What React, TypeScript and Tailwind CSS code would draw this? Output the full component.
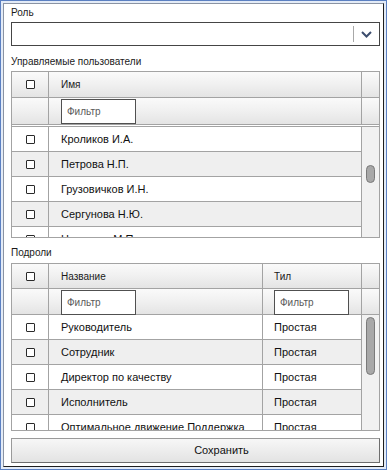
import React from 'react';

const users = ['Кроликов И.А.', 'Петрова Н.П.', 'Грузовичков И.Н.', 'Сергунова Н.Ю.', 'Никонова М.П.'];
const roles = ['Руководитель', 'Сотрудник', 'Директор по качеству', 'Исполнитель', 'Оптимальное движение Поддержка'];

const head = 'bg-gradient-to-b from-[#fafafa] via-[#f0f0f0] to-[#e4e4e4]';

function Check() {
  return <span className="block h-[9px] w-[9px] rounded-[1px] border border-[#2a2a2a] bg-white" />;
}

function Filter() {
  return (
    <input
      placeholder="Фильтр"
      className="h-[25px] w-[75px] border border-[#505050] bg-white px-[5px] text-[10px] text-[#333] outline-none placeholder:text-[#5a5a5a]"
    />
  );
}

function Thumb({ top, height }: { top: number; height: number }) {
  return (
    <div className="relative h-full w-[17px] bg-[#f1f1f1]">
      <div
        className="absolute left-[4px] w-[9px] rounded-full border border-[#7a7a7a] bg-[#a8a8a8]"
        style={{ top, height }}
      />
    </div>
  );
}

function Label({ children, pt }: { children: React.ReactNode; pt: string }) {
  return <div className={`h-[25px] ${pt} text-[10px] leading-[12px] text-[#1a1a1a]`}>{children}</div>;
}

function UsersTable() {
  return (
    <div className="h-[167px] border border-[#a3a3a3] bg-white">
      <div className={`flex h-[26px] border-b border-[#a3a3a3] ${head}`}>
        <div className="flex w-[37px] items-center justify-center border-r border-[#a3a3a3]"><Check /></div>
        <div className="flex flex-1 items-center border-r border-[#a3a3a3] pl-[12px] text-[10px] text-[#1a1a1a]">Имя</div>
        <div className="w-[17px]" />
      </div>
      <div className={`flex h-[27px] border-b border-[#a3a3a3] ${head}`}>
        <div className="w-[37px] border-r border-[#a3a3a3]" />
        <div className="flex-1 border-r border-[#a3a3a3] pl-[12px]"><Filter /></div>
        <div className="w-[17px]" />
      </div>
      <div className="h-px bg-white" />
      <div className="flex h-[111px] border-t border-[#a3a3a3]">
        <div className="flex-1 overflow-hidden border-r border-[#a3a3a3]">
          {users.map((u, i) => (
            <div key={u} className={`flex h-[25px] shrink-0 border-b border-[#a3a3a3] ${i % 2 ? 'bg-[#efefef]' : 'bg-white'}`}>
              <div className="flex w-[37px] items-center justify-center border-r border-[#a3a3a3]"><Check /></div>
              <div className="flex flex-1 items-center pl-[12px] text-[11px] text-[#111]">{u}</div>
            </div>
          ))}
        </div>
        <Thumb top={38} height={18} />
      </div>
    </div>
  );
}

function RolesTable() {
  return (
    <div className="h-[168px] border border-[#a3a3a3] bg-white">
      <div className={`flex h-[25px] border-b border-[#a3a3a3] ${head}`}>
        <div className="flex w-[37px] items-center justify-center border-r border-[#a3a3a3]"><Check /></div>
        <div className="flex w-[214px] items-center border-r border-[#a3a3a3] pl-[12px] text-[10px] text-[#1a1a1a]">Название</div>
        <div className="flex w-[99px] items-center border-r border-[#a3a3a3] pl-[11px] text-[10px] text-[#1a1a1a]">Тил</div>
        <div className="w-[17px]" />
      </div>
      <div className={`flex h-[26px] border-b border-[#a3a3a3] ${head}`}>
        <div className="w-[37px] border-r border-[#a3a3a3]" />
        <div className="w-[214px] border-r border-[#a3a3a3] pl-[12px]"><Filter /></div>
        <div className="w-[99px] border-r border-[#a3a3a3] pl-[11px]"><Filter /></div>
        <div className="w-[17px]" />
      </div>
      <div className="flex h-[115px]">
        <div className="flex-1 overflow-hidden border-r border-[#a3a3a3]">
          {roles.map((r, i) => (
            <div key={r} className={`flex h-[25px] shrink-0 border-b border-[#a3a3a3] ${i % 2 ? 'bg-[#efefef]' : 'bg-white'}`}>
              <div className="flex w-[37px] items-center justify-center border-r border-[#a3a3a3]"><Check /></div>
              <div className="flex w-[214px] items-center overflow-hidden whitespace-nowrap border-r border-[#a3a3a3] pl-[12px] text-[11px] text-[#111]">{r}</div>
              <div className="flex flex-1 items-center pl-[11px] text-[11px] text-[#111]">Простая</div>
            </div>
          ))}
        </div>
        <Thumb top={2} height={58} />
      </div>
    </div>
  );
}

export default function App() {
  return (
    <div className="h-[470px] w-[387px] border border-[#5b80c2] bg-[#e3ebf7] p-[2px] font-['Liberation_Sans',Arial,sans-serif]">
      <div className="flex h-full flex-col border border-b-[#1e1e1e] border-l-[#8a93a3] border-r-[#1e1e1e] border-t-[#8a93a3] bg-white pl-[7px] pr-[3px]">
        <div className="h-[18px] pt-[3px] text-[10px] leading-[12px] text-[#1a1a1a]">Роль</div>
        <div className="flex h-[24px] items-center border border-[#454545] bg-white">
          <div className="flex-1" />
          <div className="h-[16px] w-px bg-[#a8a8a8]" />
          <div className="flex w-[25px] items-center justify-center">
            <svg width="11" height="7" viewBox="0 0 11 7">
              <polyline points="1,1 5.5,5.5 10,1" fill="none" stroke="#3c4d6e" strokeWidth="2" />
            </svg>
          </div>
        </div>
        <Label pt="pt-[10px]">Управляемые пользователи</Label>
        <UsersTable />
        <Label pt="pt-[9px]">Подроли</Label>
        <RolesTable />
        <button className="mt-[7px] h-[25px] border border-[#9a9a9a] border-b-[#6e6e6e] border-r-[#6e6e6e] bg-gradient-to-b from-[#f7f7f7] to-[#e3e3e3] pl-[52px] text-[11px] text-[#111]">
          Сохранить
        </button>
      </div>
    </div>
  );
}
